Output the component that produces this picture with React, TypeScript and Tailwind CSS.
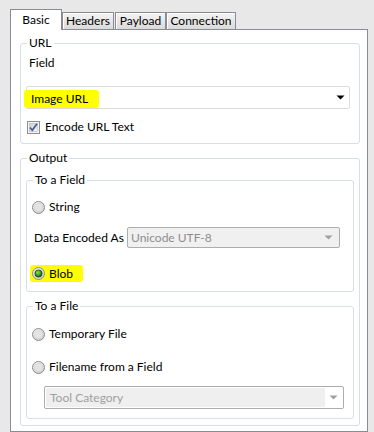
import React from "react";

// Windows-style tab dialog: Basic / Headers / Payload / Connection

const Radio = ({ checked = false }: { checked?: boolean }) => (
  <svg width="13" height="13" viewBox="0 0 13 13" className="shrink-0">
    <defs>
      <radialGradient id="rOuter" cx="40%" cy="35%" r="70%">
        <stop offset="0%" stopColor="#ffffff" />
        <stop offset="100%" stopColor="#c9c9c9" />
      </radialGradient>
      <radialGradient id="rOn" cx="40%" cy="35%" r="70%">
        <stop offset="0%" stopColor="#8fe05a" />
        <stop offset="60%" stopColor="#2f9a1c" />
        <stop offset="100%" stopColor="#0f4d08" />
      </radialGradient>
    </defs>
    <circle cx="6.5" cy="6.5" r="6" fill="url(#rOuter)" stroke="#8e8f8f" strokeWidth="1" />
    {checked ? (
      <circle cx="6.5" cy="6.5" r="3.6" fill="url(#rOn)" stroke="#1d3b12" strokeWidth="0.8" />
    ) : (
      <circle cx="6.5" cy="6.5" r="4" fill="#e4e4e4" stroke="#d2d2d2" strokeWidth="0.6" />
    )}
  </svg>
);

const Checkbox = () => (
  <svg width="13" height="13" viewBox="0 0 13 13" className="shrink-0">
    <defs>
      <linearGradient id="cbIn" x1="0" y1="0" x2="1" y2="1">
        <stop offset="0%" stopColor="#cfcfcf" />
        <stop offset="100%" stopColor="#f7f7f7" />
      </linearGradient>
    </defs>
    <rect x="0.5" y="0.5" width="12" height="12" fill="#f4f4f4" stroke="#8e8f8f" />
    <rect x="2.5" y="2.5" width="8" height="8" fill="url(#cbIn)" stroke="#b8b8b8" strokeWidth="0.6" />
    <path d="M3 6.5 L5.3 9.3 L10 2.8" fill="none" stroke="#4a5f97" strokeWidth="1.8" strokeLinejoin="round" />
  </svg>
);

const Arrow = ({ color }: { color: string }) => (
  <svg width="9" height="5" viewBox="0 0 9 5" className="shrink-0">
    <polygon points="0.5,0.5 8.5,0.5 4.5,4.5" fill={color} />
  </svg>
);

const Group = ({ title, className, children }: { title: string; className?: string; children: React.ReactNode }) => (
  <fieldset className={`border border-[#d5dfe5] rounded-[3px] pl-[5px] ${className ?? ""}`}>
    <legend className="ml-[1px] px-[2px] leading-4 text-black">{title}</legend>
    {children}
  </fieldset>
);

const Tab = ({ label, active, className }: { label: string; active?: boolean; className: string }) => (
  <div
    className={
      active
        ? `relative z-10 -mb-px h-[21px] border border-b-0 border-[#898c95] bg-white flex justify-center pt-[2px] ${className}`
        : `h-[17px] border border-b-0 border-[#898c95] bg-linear-to-b from-[#f4f4f4] to-[#dadada] shadow-[inset_1px_1px_0_#ffffff] flex justify-center leading-[15px] ${className}`
    }
  >
    {label}
  </div>
);

export default function App() {
  return (
    <div className="w-[374px] h-[432px] bg-[#e8e8e8] overflow-hidden flex flex-col text-[12px] text-black font-['Lato',sans-serif]">
      <div className="flex items-end pl-[10px] pt-[9px]">
        <Tab label="Basic" active className="w-[52px] leading-4" />
        <Tab label="Headers" className="w-[52px]" />
        <Tab label="Payload" className="ml-px w-[51px]" />
        <Tab label="Connection" className="w-[70px]" />
      </div>

      <div className="ml-[10px] w-[358px] flex-1 border border-[#898c95] bg-white pl-[9px] pr-[7px] pt-[5px]">
        <Group title="URL" className="pr-[9px] pb-[8px]">
          <div className="mt-[4px] pl-[3px] leading-4">Field</div>
          <div className="mt-[15px] h-[23px] border border-[#dcdcdc] rounded-[2px] flex items-center justify-between pr-[4px]">
            <span className="-ml-[3px] mt-[3px] h-[18px] pl-[7px] pr-[11px] bg-[#ffff00] rounded-[3px] flex items-center">
              Image URL
            </span>
            <Arrow color="#000000" />
          </div>
          <label className="mt-[10px] ml-[1px] h-4 flex items-center gap-[5px]">
            <Checkbox />
            <span>Encode URL Text</span>
          </label>
        </Group>

        <Group title="Output" className="mt-[6px] pr-[5px] pb-[6px]">
          <Group title="To a Field" className="mt-[6px] pr-[5px] pb-[9px]">
            <div className="mt-[11px] h-4 flex items-center gap-[4px]">
              <Radio />
              <span>String</span>
            </div>
            <div className="mt-[12px] h-[21px] flex items-center">
              <span className="w-[95px] shrink-0 whitespace-nowrap pl-[2px]">Data Encoded As</span>
              <div className="w-[213px] shrink-0 h-[21px] border border-[#adadad] rounded-[2px] bg-[#f0f0f0] flex items-center justify-between pl-[3px] pr-[6px] text-[#8d8d8d]">
                <span>Unicode UTF-8</span>
                <Arrow color="#a0a0a0" />
              </div>
            </div>
            <div className="mt-[17px] flex">
              <span className="-ml-[2px] h-[17px] pl-[2px] pr-[10px] bg-[#ffff00] rounded-[3px] flex items-center gap-[4px]">
                <Radio checked />
                <span>Blob</span>
              </span>
            </div>
          </Group>

          <Group title="To a File" className="mt-[6px] pr-[5px] pb-[9px]">
            <div className="mt-[12px] h-4 flex items-center gap-[4px]">
              <Radio />
              <span>Temporary File</span>
            </div>
            <div className="mt-[17px] h-4 flex items-center gap-[4px]">
              <Radio />
              <span>Filename from a Field</span>
            </div>
            <div className="mt-[11px] ml-[12px] mr-[4px] h-[23px] border border-[#adadad] rounded-[2px] bg-white p-px flex">
              <div className="flex-1 bg-[#efefef] flex items-center pl-[4px] text-[#a0a0a0]">Tool Category</div>
              <div className="w-[17px] flex items-center justify-center">
                <Arrow color="#a0a0a0" />
              </div>
            </div>
          </Group>
        </Group>
      </div>
    </div>
  );
}
